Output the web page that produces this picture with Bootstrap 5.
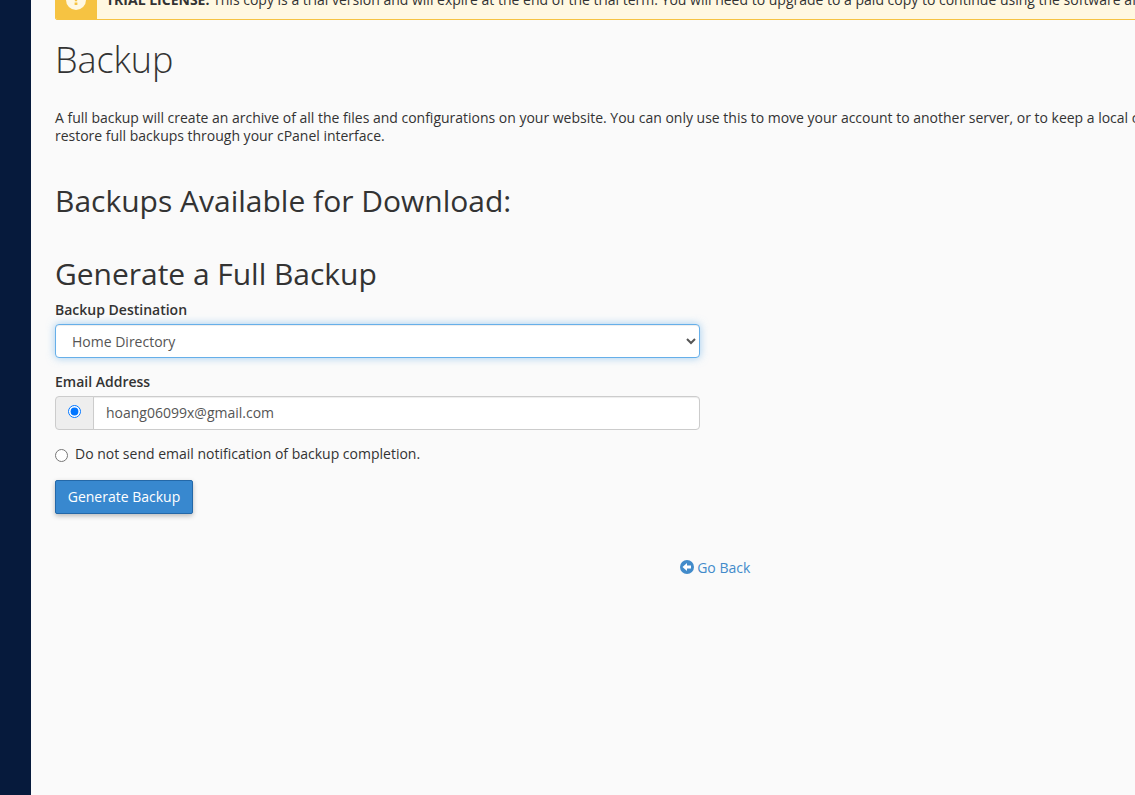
<!DOCTYPE html>
<html lang="en">
<head>
<meta charset="utf-8">
<meta name="viewport" content="width=device-width, initial-scale=1">
<title>Backup</title>
<link rel="stylesheet" href="https://cdn.jsdelivr.net/npm/bootstrap@5.3.0/dist/css/bootstrap.min.css">
<style>
body{font-family:"Open Sans",sans-serif;font-size:14px;line-height:18px;color:#333;background:#fafafa}
.side-strip{width:31px;background:#061a3c}
.page-body{width:1320px;margin-left:24px}
.trial-bar{height:40px;margin-top:-20px;background:#fff8e1;border:1px solid #f6c342;border-radius:2px}
.trial-icon{width:41px;background:#f6c342;padding-right:1px}
.trial-text{padding-left:9px}
.intro{letter-spacing:-.009px}
h1{font-size:36px;line-height:42px;font-weight:300;margin:19px 0 28px;letter-spacing:-.1px}
h2{font-size:30px;line-height:33px;font-weight:400}
.avail{margin:39px 0 40px}
.gen{margin:0 0 11px;letter-spacing:-.03px}
.form-block{width:645px}
.form-label{font-weight:600;line-height:18px;margin-bottom:5px}
.mail-label{margin-top:15px}
.form-block .form-control{height:34px;font-size:14px;line-height:20px;color:#555;border-color:#ccc;border-radius:4px;padding:6px 12px;box-shadow:inset 0 1px 1px rgba(0,0,0,.075)}
.form-block .dest{appearance:auto;border-color:#66afe9;outline:0;box-shadow:inset 0 1px 1px rgba(0,0,0,.075),0 0 8px rgba(102,175,233,.6);background:#fff}
.form-block .mail{padding:5px 12px 7px}
.input-group-text{width:39px;background:#eee;border-color:#ccc;border-radius:4px}
.form-block input[type=radio]{width:13px;height:13px;margin:0}
.form-block .input-group-text input{margin-bottom:4px}
.quiet{margin:15px 0 17px}
.form-block .quiet input{margin-top:4px}
.quiet span{margin-left:7px}
.btn-generate{height:34px;width:138px;font-size:14px;line-height:20px;padding:6px 0;font-weight:500;color:#fff;background:#3888cf;border:1px solid #2468a8;border-radius:2px;box-shadow:0 2px 5px rgba(0,0,0,.26)}
.go-back{margin-top:45px}
.back-link{color:#428bca}
.back-link svg{margin:1px 3.500px 0 0}
</style>
</head>
<body class="overflow-hidden">
<div class="d-flex vh-100">
  <aside class="side-strip flex-shrink-0"></aside>
  <main class="page-body flex-shrink-0">
    <div class="trial-bar d-flex overflow-hidden">
      <div class="trial-icon d-flex align-items-center justify-content-center flex-shrink-0">
        <svg width="20" height="20" viewBox="0 0 20 20"><circle cx="10" cy="10" r="10" fill="#fff8e1"/><path d="M8.500 4h3l-.4 7.300h-2.200zM8.600 12.600h2.800v2.300h-2.800z" fill="#f6c342"/></svg>
      </div>
      <div class="trial-text align-self-center text-nowrap"><strong>TRIAL LICENSE:</strong> This copy is a trial version and will expire at the end of the trial term. You will need to upgrade to a paid copy to continue using the software after</div>
    </div>
    <h1>Backup</h1>
    <p class="intro text-nowrap mb-0">A full backup will create an archive of all the files and configurations on your website. You can only use this to move your account to another server, or to keep a local copy<br>restore full backups through your cPanel interface.</p>
    <h2 class="avail">Backups Available for Download:</h2>
    <h2 class="gen">Generate a Full Backup</h2>
    <form class="form-block">
      <label class="form-label d-block" for="dest">Backup Destination</label>
      <select id="dest" class="form-control dest"><option>Home Directory</option></select>
      <label class="form-label d-block mail-label" for="email">Email Address</label>
      <div class="input-group flex-nowrap">
        <span class="input-group-text p-0 justify-content-center"><input type="radio" name="notify" checked></span>
        <input id="email" type="text" class="form-control mail" value="hoang06099x@gmail.com">
      </div>
      <label class="d-flex quiet"><input type="radio" name="notify"><span>Do not send email notification of backup completion.</span></label>
      <button type="button" class="btn btn-generate">Generate Backup</button>
    </form>
    <div class="go-back d-flex justify-content-center">
      <a href="#" class="back-link d-flex text-decoration-none"><svg width="14" height="14" viewBox="0 0 14 14"><circle cx="7" cy="7" r="7" fill="currentColor"/><path d="M2.500 7 7 3v2.500h4v3H7V11z" fill="#fff"/></svg><span>Go Back</span></a>
    </div>
  </main>
</div>
<script src="https://cdn.jsdelivr.net/npm/bootstrap@5.3.0/dist/js/bootstrap.bundle.min.js"></script>
</body>
</html>
